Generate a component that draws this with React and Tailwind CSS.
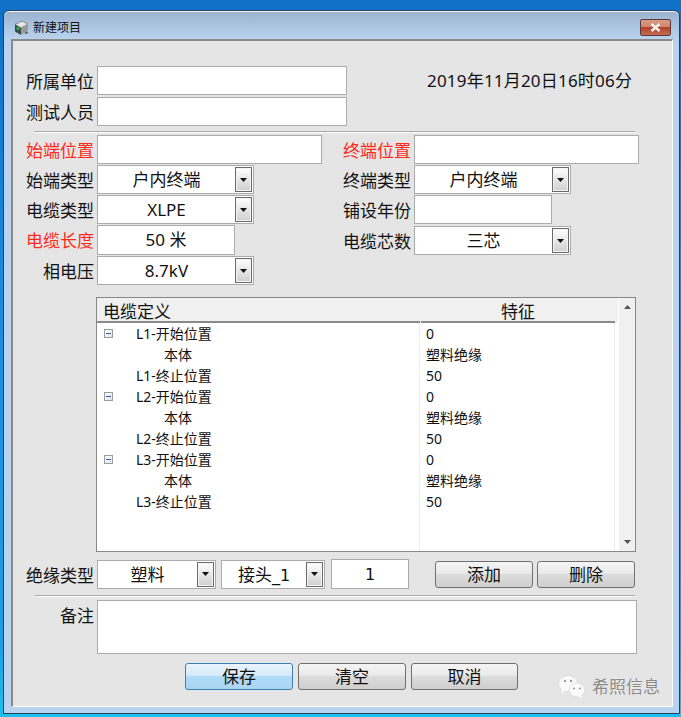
const FONT = "font-['Noto_Sans','Noto_Sans_CJK_SC',sans-serif]";
const DIGIT = "font-['DejaVu_Sans'] text-[16px]";

const rows = [
  { icon: true, name: "L1-开始位置", value: "0" },
  { sub: true, name: "本体", value: "塑料绝缘" },
  { name: "L1-终止位置", value: "50" },
  { icon: true, name: "L2-开始位置", value: "0" },
  { sub: true, name: "本体", value: "塑料绝缘" },
  { name: "L2-终止位置", value: "50" },
  { icon: true, name: "L3-开始位置", value: "0" },
  { sub: true, name: "本体", value: "塑料绝缘" },
  { name: "L3-终止位置", value: "50" },
];

function Label({ children, red }) {
  return (
    <div
      className={`h-[29px] w-[84px] shrink-0 pr-[3px] text-right text-[17px] leading-[31px] whitespace-nowrap ${
        red ? "text-[#ff2a1a]" : "text-[#111]"
      }`}
    >
      {children}
    </div>
  );
}

function Input({ className = "", children }) {
  return (
    <div
      className={`h-[29px] shrink-0 border border-[#ababab] bg-white text-center text-[17px] leading-[27px] text-[#111] ${className}`}
    >
      {children}
    </div>
  );
}

function Arrow({ small }) {
  return (
    <svg width="7" height="4" viewBox="0 0 7 4">
      <path d="M0 0H7L3.5 4Z" fill={small ? "#555" : "#111"} />
    </svg>
  );
}

function Select({ className = "", value }) {
  return (
    <div
      className={`flex h-[29px] shrink-0 items-center border border-[#ababab] bg-white pr-px text-[17px] text-[#111] ${className}`}
    >
      <div className="flex-1 pt-px text-center whitespace-nowrap">{value}</div>
      <div className="flex h-[25px] w-[17px] shrink-0 items-center justify-center border border-[#6a6a6a] bg-gradient-to-b from-white to-[#cfcfcf] shadow-[inset_0_0_0_1px_#f4f4f4]">
        <Arrow />
      </div>
    </div>
  );
}

function Button({ className = "", active, children }) {
  return (
    <button
      className={`h-[27px] shrink-0 rounded-[3px] border text-[17px] leading-[25px] text-[#111] ${
        active
          ? "border-[#3c7fb1] bg-[linear-gradient(#e8f3fc_0%,#d8ebfa_45%,#b0daf6_50%,#aad6f4_100%)]"
          : "border-[#707070] bg-[linear-gradient(#f4f4f4_0%,#ebebeb_45%,#dcdcdc_50%,#cfcfcf_100%)]"
      } ${className}`}
    >
      {children}
    </button>
  );
}

function TreeBox() {
  return (
    <div className="flex h-[9px] w-[9px] items-center justify-center border border-[#9a9a9a] bg-gradient-to-br from-white to-[#dfe3ea]">
      <div className="h-px w-[5px] bg-[#3a5a9a]" />
    </div>
  );
}

function WindowIcon() {
  return (
    <svg width="15" height="16" viewBox="0 0 15 16">
      <path d="M1 4.5 8 1l6 3-7 4Z" fill="#e6e6e6" stroke="#555" strokeWidth=".6" />
      <path d="M1 4.5 7 8v7l-6-3.5Z" fill="#3a4a44" />
      <path d="M7 8l7-4v6l-7 5Z" fill="#9a9a9a" />
      <rect x="2.5" y="7" width="3" height="3" fill="#2fa84a" />
      <path d="M12 11l2.5 2-4 1Z" fill="#555" />
    </svg>
  );
}

function CloseButton() {
  return (
    <div className="flex h-[17px] w-[31px] items-center justify-center rounded-[2px] border border-[#5c3a3a] bg-[linear-gradient(#d99a86_0%,#cf8672_45%,#b5432a_50%,#c46a54_100%)]">
      <svg width="11" height="9" viewBox="0 0 11 9">
        <path d="M1.5 1 9.5 8M9.5 1 1.5 8" stroke="#f4f4f4" strokeWidth="2.4" />
      </svg>
    </div>
  );
}

function WeChat() {
  return (
    <svg width="28" height="24" viewBox="0 0 28 24">
      <ellipse cx="10" cy="8.5" rx="9.5" ry="8" fill="#fafafa" stroke="#d0d0d0" strokeWidth=".6" />
      <path d="M4 14l-1 4 5-2.5Z" fill="#fafafa" />
      <ellipse cx="19" cy="15" rx="8" ry="7" fill="#fafafa" stroke="#d0d0d0" strokeWidth=".6" />
      <path d="M23 20l2 3.5-5-2Z" fill="#fafafa" />
      <circle cx="7" cy="6" r="1.2" fill="#999" />
      <circle cx="13" cy="6" r="1.2" fill="#999" />
      <circle cx="16" cy="13.5" r="1" fill="#999" />
      <circle cx="22" cy="13.5" r="1" fill="#999" />
    </svg>
  );
}

function CableTable() {
  return (
    <div className="ml-[83px] mt-[12px] flex h-[255px] w-[540px] border border-[#888] bg-white">
      <div className="flex w-[521px] flex-col">
        <div className="flex h-[25px] shrink-0 bg-[#f0f0f0] text-[17px] leading-[27px] text-[#111]">
          <div className="w-[323px] border-b-2 border-[#8a8a8a] pl-[6px]">电缆定义</div>
          <div className="ml-px w-[194px] border-b-2 border-[#8a8a8a] text-center">特征</div>
        </div>
        <div className="flex min-h-0 flex-1 text-[14px] leading-[21px] text-[#111]">
          <div className="w-[323px] border-r border-[#eeeeee]">
            {rows.map((row, i) => (
              <div key={i} className="flex h-[21px] items-center">
                <div className="w-[39px] shrink-0 pl-[7px]">{row.icon && <TreeBox />}</div>
                <div className={row.sub ? "ml-[28px]" : ""}>{row.name}</div>
              </div>
            ))}
          </div>
          <div className="w-[195px] border-r border-[#eeeeee] pl-[6px]">
            {rows.map((row, i) => (
              <div key={i} className="h-[21px]">
                {row.value}
              </div>
            ))}
          </div>
        </div>
      </div>
      <div className="ml-px flex flex-1 flex-col items-center justify-between bg-[#f0f0f0] py-[7px]">
        <svg width="7" height="4" viewBox="0 0 7 4">
          <path d="M0 4H7L3.5 0Z" fill="#555" />
        </svg>
        <Arrow small />
      </div>
    </div>
  );
}

export default function App() {
  return (
    <div
      className={`h-[717px] w-[681px] overflow-hidden bg-[linear-gradient(#0f70c8_0%,#1a8ade_40%,#1c9fe4_90%,#1fc0ea_100%)] pl-[3px] pt-[10px] ${FONT}`}
    >
      <div className="flex h-[704px] w-[677px] flex-col overflow-hidden rounded-t-[6px] border border-[#24405e] bg-[linear-gradient(#9bb2cf_0px,#b9d3ee_28px,#b9d3ee_100%)] shadow-[inset_0_1px_0_#f2f6fa]">
        <div className="flex h-[28px] shrink-0 items-center pl-[10px] pr-[8px] pt-[5px]">
          <WindowIcon />
          <div className="ml-[4px] flex-1 text-[12px] text-[#111]">新建项目</div>
          <CloseButton />
        </div>

        <div className="relative ml-[7px] flex h-[668px] w-[662px] flex-col border-l-2 border-t-2 border-b border-r border-[#8a8a8a] border-b-white border-r-white bg-[#e5e5e5] pt-[25px]">
          <div className="flex">
            <div className="flex w-[414px] flex-col gap-[2px]">
              <div className="flex">
                <Label>所属单位</Label>
                <Input className="w-[250px]" />
              </div>
              <div className="flex">
                <Label>测试人员</Label>
                <Input className="w-[250px]" />
              </div>
            </div>
            <div className="text-[17px] leading-[29px] whitespace-nowrap text-[#111] tracking-[0.2px]">
              2019年11月20日16时06分
            </div>
          </div>

          <div className="ml-[21px] mt-[5px] h-[2px] w-[601px] border-b border-t border-[#a8a8a8] border-b-white" />

          <div className="mt-[2px] flex">
            <div className="flex w-[317px] flex-col">
              <div className="flex h-[30px]">
                <Label red>始端位置</Label>
                <Input className="w-[225px]" />
              </div>
              <div className="flex h-[30px]">
                <Label>始端类型</Label>
                <Select className="w-[157px]" value="户内终端" />
              </div>
              <div className="flex h-[30px]">
                <Label>电缆类型</Label>
                <Select className="w-[157px]" value="XLPE" />
              </div>
              <div className="flex h-[31px]">
                <Label red>电缆长度</Label>
                <Input className="h-[30px] w-[138px]">50 米</Input>
              </div>
              <div className="flex h-[29px]">
                <Label>相电压</Label>
                <Select className="w-[157px]" value="8.7kV" />
              </div>
            </div>
            <div className="flex flex-col">
              <div className="flex h-[30px]">
                <Label red>终端位置</Label>
                <Input className="w-[225px]" />
              </div>
              <div className="flex h-[30px]">
                <Label>终端类型</Label>
                <Select className="w-[157px]" value="户内终端" />
              </div>
              <div className="flex h-[31px]">
                <Label>铺设年份</Label>
                <Input className="w-[138px]" />
              </div>
              <div className="flex h-[29px]">
                <Label>电缆芯数</Label>
                <Select className="w-[157px]" value="三芯" />
              </div>
            </div>
          </div>

          <CableTable />

          <div className="mt-[7px] flex h-[30px] items-center">
            <Label>绝缘类型</Label>
            <Select className="w-[119px]" value="塑料" />
            <Select
              className="ml-[5px] w-[104px]"
              value={
                <>
                  接头<span className={DIGIT}>_1</span>
                </>
              }
            />
            <Input className="ml-[6px] h-[30px] w-[78px]">
              <span className={DIGIT}>1</span>
            </Input>
            <Button className="ml-[26px] w-[98px]">添加</Button>
            <Button className="ml-[4px] w-[98px]">删除</Button>
          </div>

          <div className="ml-[22px] mt-[6px] h-[2px] w-[600px] border-b border-t border-[#a8a8a8] border-b-white" />

          <div className="mt-[3px] flex">
            <Label>备注</Label>
            <Input className="h-[54px] w-[540px]" />
          </div>

          <div className="ml-[172px] mt-[9px] flex gap-[5px]">
            <Button active className="w-[108px]">保存</Button>
            <Button className="w-[108px]">清空</Button>
            <Button className="w-[107px]">取消</Button>
          </div>

          <div className="absolute left-[545px] top-[634px] flex items-center gap-[6px]">
            <WeChat />
            <div className="text-[17px] leading-[24px] whitespace-nowrap text-[#8a8a8a] [text-shadow:0_0_1px_#fff]">
              希照信息
            </div>
          </div>
        </div>
      </div>
    </div>
  );
}
